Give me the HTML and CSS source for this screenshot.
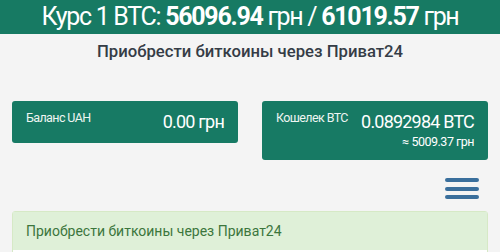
FILE: index.html
```html
<!DOCTYPE html>
<html lang="ru">
<head>
<meta charset="utf-8">
<link rel="stylesheet" href="styles.css">
</head>
<body>
<header class="rate">Курс 1 BTC: <b>56096.94</b> грн / <b>61019.57</b> грн</header>
<h1 class="title">Приобрести биткоины через Приват24</h1>
<div class="cards">
  <div class="card">
    <div class="label">Баланс UAH</div>
    <div class="values"><div class="value">0.00 грн</div></div>
  </div>
  <div class="card">
    <div class="label">Кошелек BTC</div>
    <div class="values">
      <div class="value">0.0892984 BTC</div>
      <div class="sub">≈ 5009.37 грн</div>
    </div>
  </div>
</div>
<div class="menu-row">
  <button class="burger" aria-label="menu"><span></span><span></span><span></span></button>
</div>
<div class="panel">
  <div class="panel-heading">Приобрести биткоины через Приват24</div>
  <div class="panel-body"></div>
</div>
</body>
</html>
```
FILE: styles.css
```css
html, body {
  margin: 0;
  padding: 0;
  background: #f4f4f4;
  font-family: Roboto, "Liberation Sans", sans-serif;
}
.rate {
  background: #177a63;
  color: #ffffff;
  height: 34px;
  line-height: 34px;
  font-size: 25px;
  letter-spacing: -1.3px;
  text-align: center;
  white-space: nowrap;
}
.rate b {
  font-weight: 700;
}
.title {
  margin: 8px 0 0;
  font-size: 16.7px;
  line-height: 20px;
  font-weight: 500;
  color: #353c46;
  text-align: center;
}
.cards {
  display: flex;
  align-items: flex-start;
  gap: 24px;
  padding: 0 12px;
  margin-top: 39px;
}
.card {
  flex: 1;
  display: flex;
  justify-content: space-between;
  align-items: flex-start;
  background: #177a64;
  color: #fff;
  border-radius: 3px;
  padding: 9px 14px 9px 14px;
  white-space: nowrap;
}
.card:last-child {
  padding-bottom: 10px;
}
.label {
  font-size: 12.5px;
  line-height: 16px;
  letter-spacing: -0.6px;
  color: #eef5f2;
}
.values {
  text-align: right;
}
.value {
  font-size: 18px;
  line-height: 24px;
  letter-spacing: -0.8px;
}
.sub {
  font-size: 12.5px;
  line-height: 16px;
  letter-spacing: -0.5px;
}
.menu-row {
  display: flex;
  justify-content: flex-end;
  padding-right: 21px;
  margin-top: 18px;
}
.burger {
  display: flex;
  flex-direction: column;
  gap: 4.5px;
  width: 34px;
  padding: 0;
  border: 0;
  background: none;
}
.burger span {
  display: block;
  height: 4px;
  width: 34px;
  border-radius: 2px;
  background: #3a6f9c;
}
.panel {
  margin: 12px 12px 0;
  border: 1px solid #d6e9c6;
  border-radius: 3px;
  background: #fff;
}
.panel-heading {
  background: #dff0d8;
  color: #3c763d;
  font-size: 14px;
  line-height: 18px;
  padding: 10px 13px;
}
.panel-body {
  height: 20px;
}
```
